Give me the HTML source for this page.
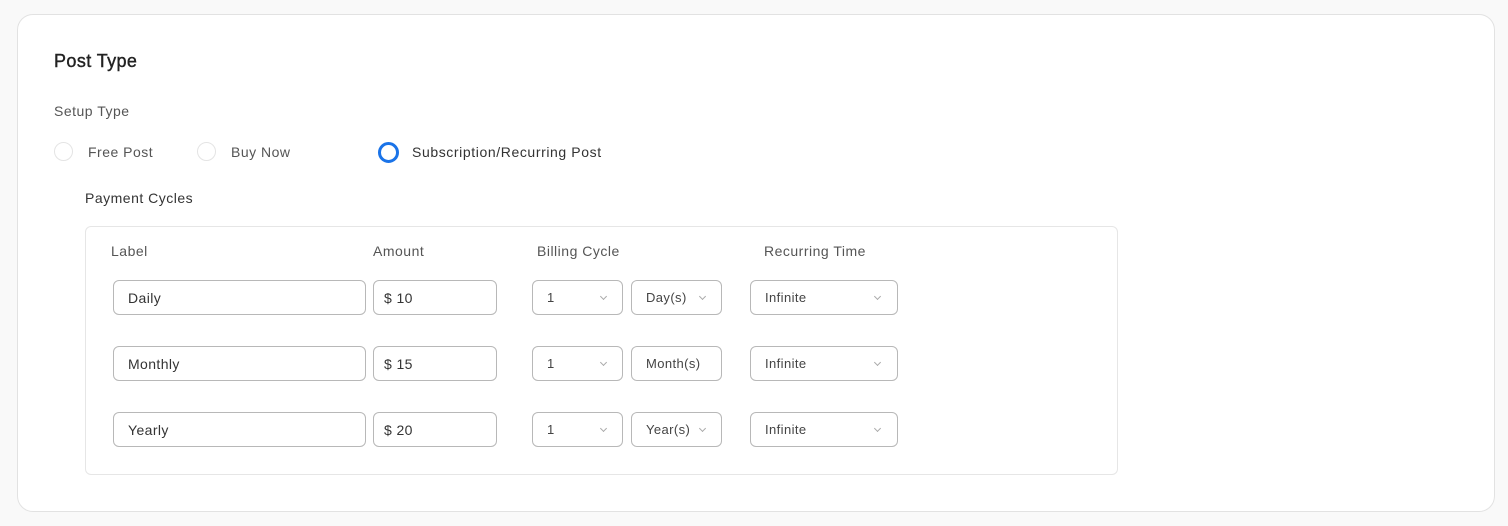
<!DOCTYPE html>
<html><head><style>
body{margin:0;width:1508px;height:526px;background:#f9f9f9;font-family:"Liberation Sans",sans-serif;position:relative;overflow:hidden}
.a{position:absolute}
.card{left:17px;top:14px;width:1476px;height:496px;border:1px solid #e2e2e2;border-radius:16px;background:#fff}
.t{white-space:nowrap;line-height:1;letter-spacing:0.5px}
.rad{width:19px;height:19px;border:1px solid #e4e4e4;border-radius:50%;box-sizing:border-box}
.inp{height:35px;border:1px solid #b8b8b8;border-radius:6px;box-sizing:border-box;background:#fff;font-size:14px;color:#333;display:flex;align-items:center;letter-spacing:0.4px}
.sel{font-size:13px;color:#444}
.chev{position:absolute;top:13px;width:4px;height:4px;border-right:1px solid #aaa;border-bottom:1px solid #aaa;transform:rotate(45deg)}
</style></head><body>
<div class="a card"></div>
<div class="a t" style="left:54px;top:52px;font-size:18px;color:#222;letter-spacing:0.4px;-webkit-text-stroke:0.4px #222">Post Type</div>
<div class="a t" style="left:54px;top:104px;font-size:14px;color:#555">Setup Type</div>
<div class="a rad" style="left:54px;top:142px"></div>
<div class="a t" style="left:88px;top:145px;font-size:14px;color:#555">Free Post</div>
<div class="a rad" style="left:197px;top:142px"></div>
<div class="a t" style="left:231px;top:145px;font-size:14px;color:#555">Buy Now</div>
<div class="a rad" style="left:378px;top:142px;width:21px;height:21px;border:3px solid #1a73e8"></div>
<div class="a t" style="left:412px;top:145px;font-size:14px;color:#333;letter-spacing:0.6px">Subscription/Recurring Post</div>
<div class="a t" style="left:85px;top:191px;font-size:14px;color:#333">Payment Cycles</div>
<div class="a" style="left:85px;top:226px;width:1033px;height:249px;border:1px solid #e6e6e6;border-radius:6px;box-sizing:border-box"></div>
<div class="a t" style="left:111px;top:244px;font-size:14px;color:#555">Label</div>
<div class="a t" style="left:373px;top:244px;font-size:14px;color:#555">Amount</div>
<div class="a t" style="left:537px;top:244px;font-size:14px;color:#555">Billing Cycle</div>
<div class="a t" style="left:764px;top:244px;font-size:14px;color:#555">Recurring Time</div>

<div class="a inp" style="left:113px;top:280px;width:253px;padding-left:14px">Daily</div>
<div class="a inp" style="left:373px;top:280px;width:124px;padding-left:10px">$ 10</div>
<div class="a inp sel" style="left:532px;top:280px;width:91px;padding-left:14px">1<span class="chev" style="left:68px"></span></div>
<div class="a inp sel" style="left:631px;top:280px;width:91px;padding-left:14px">Day(s)<span class="chev" style="left:68px"></span></div>
<div class="a inp sel" style="left:750px;top:280px;width:148px;padding-left:14px">Infinite<span class="chev" style="left:124px"></span></div>

<div class="a inp" style="left:113px;top:346px;width:253px;padding-left:14px">Monthly</div>
<div class="a inp" style="left:373px;top:346px;width:124px;padding-left:10px">$ 15</div>
<div class="a inp sel" style="left:532px;top:346px;width:91px;padding-left:14px">1<span class="chev" style="left:68px"></span></div>
<div class="a inp sel" style="left:631px;top:346px;width:91px;padding-left:14px">Month(s)</div>
<div class="a inp sel" style="left:750px;top:346px;width:148px;padding-left:14px">Infinite<span class="chev" style="left:124px"></span></div>

<div class="a inp" style="left:113px;top:412px;width:253px;padding-left:14px">Yearly</div>
<div class="a inp" style="left:373px;top:412px;width:124px;padding-left:10px">$ 20</div>
<div class="a inp sel" style="left:532px;top:412px;width:91px;padding-left:14px">1<span class="chev" style="left:68px"></span></div>
<div class="a inp sel" style="left:631px;top:412px;width:91px;padding-left:14px">Year(s)<span class="chev" style="left:68px"></span></div>
<div class="a inp sel" style="left:750px;top:412px;width:148px;padding-left:14px">Infinite<span class="chev" style="left:124px"></span></div>
</body></html>
